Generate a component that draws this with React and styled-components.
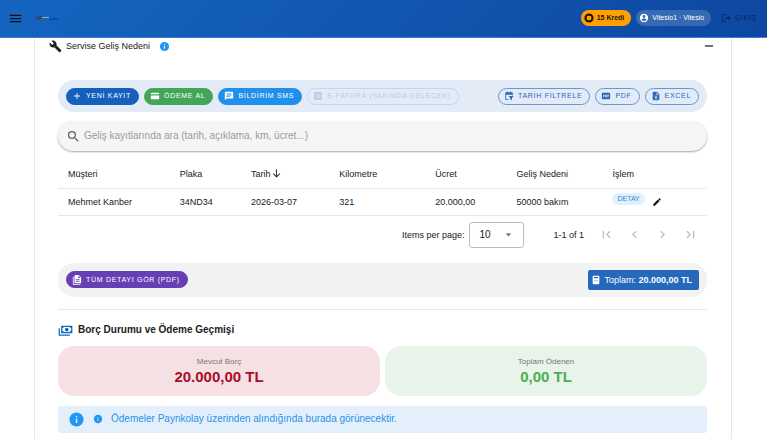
import React from "react";
import styled, { createGlobalStyle } from "styled-components";

const GlobalStyle = createGlobalStyle`
  * { box-sizing: border-box; }
  html { overflow: hidden; }
  body {
    margin: 0;
    background: #fff;
    color: #212121;
    font-family: "Liberation Sans", Arial, sans-serif;
    font-size: 9px;
    line-height: 12px;
  }
  button, input, select { font: inherit; color: inherit; margin: 0; }
  button { cursor: pointer; }
`;

const paths = {
  menu: "M3,6H21V8H3V6M3,11H21V13H3V11M3,16H21V18H3V16Z",
  wrench:
    "M22.7,19L13.6,9.9C14.5,7.6 14,4.9 12.1,3C10.1,1 7.1,0.6 4.7,1.7L9,6L6,9L1.6,4.7C0.4,7.1 0.9,10.1 2.9,12.1C4.8,14 7.5,14.5 9.8,13.6L18.9,22.7C19.3,23.1 19.9,23.1 20.3,22.7L22.6,20.4C23.1,20 23.1,19.3 22.7,19Z",
  info: "M13,9H11V7H13M13,17H11V11H13M12,2A10,10 0 0,0 2,12A10,10 0 0,0 12,22A10,10 0 0,0 22,12A10,10 0 0,0 12,2Z",
  minus: "M19,13H5V11H19V13Z",
  plus: "M19,13H13V19H11V13H5V11H11V5H13V11H19V13Z",
  card: "M4,4H20A2,2 0 0,1 22,6V8H2V6A2,2 0 0,1 4,4M2,11H22V18A2,2 0 0,1 20,20H4A2,2 0 0,1 2,18V11Z",
  message:
    "M20,2H4A2,2 0 0,0 2,4V22L6,18H20A2,2 0 0,0 22,16V4C22,2.89 21.1,2 20,2M6,9H18V11H6M14,14H6V12H14M18,8H6V6H18",
  invoice:
    "M5,3H19A2,2 0 0,1 21,5V19A2,2 0 0,1 19,21H5A2,2 0 0,1 3,19V5A2,2 0 0,1 5,3M6,7V9H8V7H6M10,7V9H18V7H10M6,11V13H8V11H6M10,11V13H18V11H10M6,15V17H8V15H6M10,15V17H18V15H10Z",
  calendar:
    "M7,1V3H5A2,2 0 0,0 3,5V19A2,2 0 0,0 5,21H11V19H5V9H19V11H21V5A2,2 0 0,0 19,3H17V1H15V3H9V1H7M11,12H23L19,17V22L15,20V17L11,12Z",
  pdf: "M4,4H20A2,2 0 0,1 22,6V18A2,2 0 0,1 20,20H4A2,2 0 0,1 2,18V6A2,2 0 0,1 4,4M5,9V15H6.5V13H8.5V9H5M6.5,10.3H7.3V11.7H6.5V10.3M10,9V15H12.5A1.5,1.5 0 0,0 14,13.5V10.5A1.5,1.5 0 0,0 12.5,9H10M11.5,10.5H12.5V13.5H11.5V10.5M15.5,9V15H17V13H18.5V11.5H17V10.5H19V9H15.5Z",
  excel:
    "M14,2H6A2,2 0 0,0 4,4V20A2,2 0 0,0 6,22H18A2,2 0 0,0 20,20V8L14,2M15.8,20H14L12,16.6L10,20H8.2L11.1,15.5L8.2,11H10L12,14.4L14,11H15.8L12.9,15.5L15.8,20M13,9V3.5L18.5,9H13Z",
  search:
    "M9.5,3A6.5,6.5 0 0,1 16,9.5C16,11.11 15.41,12.59 14.44,13.73L14.71,14H15.5L20.5,19L19,20.5L14,15.5V14.71L13.73,14.44C12.59,15.41 11.11,16 9.5,16A6.5,6.5 0 0,1 3,9.5A6.5,6.5 0 0,1 9.5,3M9.5,5C7,5 5,7 5,9.5C5,12 7,14 9.5,14C12,14 14,12 14,9.5C14,7 12,5 9.5,5Z",
  arrowDown: "M11,3H13V17L18.5,11.5L19.92,12.92L12,20.84L4.08,12.92L5.5,11.5L11,17V3Z",
  pencil:
    "M20.71,7.04C21.1,6.65 21.1,6 20.71,5.63L18.37,3.29C18,2.9 17.35,2.9 16.96,3.29L15.12,5.12L18.87,8.87M3,17.25V21H6.75L17.81,9.93L14.06,6.18L3,17.25Z",
  caret: "M7,10L12,15L17,10H7Z",
  first: "M18.41,16.59L13.82,12L18.41,7.41L17,6L11,12L17,18L18.41,16.59M6,6H8V18H6V6Z",
  prev: "M15.41,16.58L10.83,12L15.41,7.41L14,6L8,12L14,18L15.41,16.58Z",
  next: "M8.59,16.58L13.17,12L8.59,7.41L10,6L16,12L10,18L8.59,16.58Z",
  last: "M5.59,7.41L10.18,12L5.59,16.59L7,18L13,12L7,6L5.59,7.41M16,6H18V18H16V6Z",
  documents:
    "M16,0H8A2,2 0 0,0 6,2V18A2,2 0 0,0 8,20H20A2,2 0 0,0 22,18V6L16,0M18,16H9V14H18V16M18,12H9V10H18V12M15,7V1.5L20.5,7H15M4,4V22H20V24H4A2,2 0 0,1 2,22V4H4Z",
  calculator:
    "M6,2H18A2,2 0 0,1 20,4V20A2,2 0 0,1 18,22H6A2,2 0 0,1 4,20V4A2,2 0 0,1 6,2M7,5V8H17V5H7M8,12V13H10V12H8M11,12V13H13V12H11M14,12V13H16V12H14M8,16V17H10V16H8M11,16V17H13V16H11M14,16V17H16V16H14Z",
  cash: "M5,6H23V18H5V6M14,9A3,3 0 0,1 17,12A3,3 0 0,1 14,15A3,3 0 0,1 11,12A3,3 0 0,1 14,9M9,8A2,2 0 0,1 7,10V14A2,2 0 0,1 9,16H19A2,2 0 0,1 21,14V10A2,2 0 0,1 19,8H9M1,10H3V20H19V22H1V10Z",
  account:
    "M12,2A10,10 0 0,0 2,12A10,10 0 0,0 12,22A10,10 0 0,0 22,12A10,10 0 0,0 12,2M12,5A3.5,3.5 0 0,1 12,12A3.5,3.5 0 0,1 12,5M12,19.5C9.5,19.5 7.3,18.2 6,16.2C6,14.2 10,13.2 12,13.2C14,13.2 18,14.2 18,16.2C16.7,18.2 14.5,19.5 12,19.5Z",
  coin: "M12,1A11,11 0 0,0 1,12A11,11 0 0,0 12,23A11,11 0 0,0 23,12A11,11 0 0,0 12,1M12,6L14,7H17V10L18,12L17,14V17H14L12,18L10,17H7V14L6,12L7,10V7H10L12,6Z",
  logout:
    "M17,7L15.59,8.41L18.17,11H9V13H18.17L15.59,15.58L17,17L22,12L17,7M4,5H12V3H4A2,2 0 0,0 2,5V19A2,2 0 0,0 4,21H12V19H4V5Z",
};

const Svg = styled.svg`
  display: block;
  flex: none;
  width: ${(p) => p.$size}px;
  height: ${(p) => p.$size}px;
  fill: ${(p) => p.$color || "currentColor"};
`;

function Icon({ name, size = 10, color }) {
  return (
    <Svg viewBox="0 0 24 24" $size={size} $color={color} aria-hidden="true">
      <path fillRule="evenodd" d={paths[name]} />
    </Svg>
  );
}

const TopBar = styled.header`
  display: flex;
  align-items: center;
  height: 38px;
  margin-right: 1px;
  padding: 0 10px 1px 8px;
  border-bottom: 1px solid #3b7fd0;
  background: linear-gradient(135deg, #1565c0, #0d47a1);
`;

const IconButton = styled.button`
  display: inline-flex;
  align-items: center;
  justify-content: center;
  padding: 0;
  border: 0;
  background: none;
  color: ${(p) => p.$color || "#111"};
`;

const Logo = styled.svg`
  width: 24px;
  height: 8px;
  margin-left: 12px;
`;

const TopActions = styled.div`
  display: flex;
  align-items: center;
  gap: 5px;
  margin-left: auto;
`;

const Chip = styled.span`
  display: inline-flex;
  align-items: center;
  gap: 3px;
  height: 16px;
  padding: 0 7px 0 3px;
  border-radius: 8px;
  font-size: 7px;
  font-weight: ${(p) => (p.$credit ? 700 : 400)};
  color: ${(p) => (p.$credit ? "#201400" : "#fff")};
  background: ${(p) => (p.$credit ? "#ffa000" : "rgba(255, 255, 255, 0.17)")};
`;

const ExitButton = styled(IconButton)`
  gap: 4px;
  margin-left: 5px;
  color: #0a2351;
  font-size: 7px;
  letter-spacing: 0.1em;
`;

const Panel = styled.main`
  margin: 0 36px 0 34px;
  padding: 0 24px 6px 23px;
  border: solid #e8e8e8;
  border-width: 0 1px;
`;

const PanelHead = styled.div`
  display: flex;
  align-items: center;
  gap: 4px;
  height: 16px;
  margin: 0 -9px 26px;
`;

const PanelTitle = styled.h1`
  margin: 0 5px 0 0;
  font-size: 9px;
  font-weight: 400;
`;

const Spacer = styled.span`
  flex: 1;
`;

const ActionBar = styled.div`
  display: flex;
  align-items: center;
  gap: 5px;
  min-height: ${(p) => (p.$muted ? 34 : 32)}px;
  padding: 0 8px;
  border-radius: 16px;
  background: ${(p) => (p.$muted ? "#f2f2f2" : "#e3ebf7")};
`;

const PillButton = styled.button`
  display: inline-flex;
  align-items: center;
  gap: 4px;
  height: 17px;
  padding: 0 7px 0 5px;
  border: 1px solid ${(p) => p.$line || p.$fill};
  border-radius: 9px;
  background: ${(p) => p.$fill || "transparent"};
  color: ${(p) => p.$ink || "#fff"};
  font-size: 7px;
  letter-spacing: 0.1em;
  white-space: nowrap;
  &:disabled { cursor: default; }
`;

const SearchBox = styled.label`
  display: flex;
  align-items: center;
  gap: 3px;
  height: 30px;
  margin-top: 9px;
  padding: 0 8px;
  border-radius: 15px;
  background: #f5f5f5;
  box-shadow: 0 1px 2px rgba(0, 0, 0, 0.35);
  color: #616161;
`;

const SearchInput = styled.input`
  flex: 1;
  min-width: 0;
  padding: 0;
  border: 0;
  outline: 0;
  background: none;
  font-size: 10px;
  &::placeholder { color: #9b9b9b; opacity: 1; }
`;

const Table = styled.table`
  width: 100%;
  margin-top: 9px;
  border-collapse: collapse;
  table-layout: fixed;
`;

const Cell = styled.td`
  height: ${(p) => (p.$head ? 28 : 27)}px;
  padding: 0 10px;
  border-bottom: 1px solid #e8e8e8;
  font-weight: 400;
  text-align: left;
  white-space: nowrap;
`;

const Col = styled.col`
  width: ${(p) => p.$w}%;
`;

const Sort = styled.span`
  display: flex;
  align-items: center;
`;

const RowActions = styled.div`
  display: flex;
  gap: 7px;
`;

const DetailButton = styled.button`
  height: 12px;
  margin-bottom: 6px;
  padding: 0 5px;
  border: 0;
  border-radius: 6px;
  background: #e0f0fd;
  color: #2b8de3;
  font-size: 7px;
  line-height: 12px;
`;

const Pager = styled.div`
  display: flex;
  align-items: center;
  justify-content: flex-end;
  height: 38px;
  margin-bottom: 9px;
  padding-right: 9px;
`;

const SelectWrap = styled.div`
  display: grid;
  align-items: center;
  width: 55px;
  height: 26px;
  margin: 0 29px 0 5px;
  border: 1px solid #bdbdbd;
  border-radius: 3px;
  > * { grid-area: 1 / 1; }
  > svg { justify-self: end; margin-right: 8px; pointer-events: none; }
`;

const Select = styled.select`
  width: 100%;
  height: 100%;
  padding: 0 9px;
  border: 0;
  appearance: none;
  background: none;
  font-size: 10px;
`;

const PageButtons = styled.div`
  display: flex;
  gap: 13px;
  margin-left: 15px;
`;

const Total = styled.div`
  display: flex;
  align-items: center;
  gap: 3px;
  height: 20px;
  padding: 0 7px 0 3px;
  border-radius: 2px;
  background: #2569bd;
  color: #fff;
`;

const DebtHead = styled.h2`
  display: flex;
  align-items: center;
  gap: 5px;
  height: 37px;
  margin: 12px 0 0;
  padding-top: 4px;
  border-top: 1px solid #e8e8e8;
  font-size: 10px;
  font-weight: 700;
`;

const Summary = styled.div`
  display: grid;
  grid-template-columns: 1fr 1fr;
  gap: 5px;
`;

const SummaryCard = styled.section`
  padding: 10px;
  border-radius: 16px;
  background: ${(p) => p.$bg};
  text-align: center;
`;

const SummaryLabel = styled.div`
  color: #777;
  font-size: 8px;
  line-height: 12px;
`;

const Amount = styled.div`
  color: ${(p) => p.$color};
  font-size: 15px;
  font-weight: 700;
  line-height: 18px;
`;

const Notice = styled.div`
  display: flex;
  align-items: center;
  gap: 8px;
  height: 27px;
  margin-top: 10px;
  padding: 0 10px;
  border-radius: 3px;
  background: #e3f0fc;
  color: #2d91e8;
  font-size: 10px;
`;

const columns = [
  ["Müşteri", 17.2],
  ["Plaka", 11],
  ["Tarih", 13.6],
  ["Kilometre", 14.8],
  ["Ücret", 12.5],
  ["Geliş Nedeni", 14.8],
  ["İşlem", 16.1],
];
const record = ["Mehmet Kanber", "34ND34", "2026-03-07", "321", "20.000,00", "50000 bakım"];
const pages = [
  ["first", "İlk sayfa"],
  ["prev", "Önceki sayfa"],
  ["next", "Sonraki sayfa"],
  ["last", "Son sayfa"],
];

export default function App() {
  return (
    <>
      <GlobalStyle />
      <TopBar>
        <IconButton aria-label="Menü">
          <Icon name="menu" size={15} />
        </IconButton>
        <Logo viewBox="0 0 24 8" aria-hidden="true">
          <path d="M0 4.5Q3 1 8 2.5L6 5.5Q3 7 0 4.5Z" fill="#244e78" />
          <path d="M7 3h7v1H7z" fill="#8daab9" />
          <path d="M5 5h10v1H5z" fill="#315f89" />
          <path d="M14 4h9v2h-9z" fill="#064cc7" />
        </Logo>
        <TopActions>
          <Chip $credit>
            <Icon name="coin" size={10} />
            15 Kredi
          </Chip>
          <Chip>
            <Icon name="account" size={10} />
            Vitesio1 · Vitesio
          </Chip>
          <ExitButton>
            <Icon name="logout" size={10} />
            ÇIKIŞ
          </ExitButton>
        </TopActions>
      </TopBar>

      <Panel>
        <PanelHead>
          <Icon name="wrench" size={13} />
          <PanelTitle>Servise Geliş Nedeni</PanelTitle>
          <Icon name="info" size={11} color="#2196f3" />
          <Spacer />
          <IconButton aria-label="Daralt">
            <Icon name="minus" size={14} />
          </IconButton>
        </PanelHead>

        <ActionBar>
          <PillButton $fill="#1560bd">
            <Icon name="plus" />
            YENİ KAYIT
          </PillButton>
          <PillButton $fill="#43a657">
            <Icon name="card" />
            ÖDEME AL
          </PillButton>
          <PillButton $fill="#218fec">
            <Icon name="message" />
            BİLDİRİM SMS
          </PillButton>
          <PillButton $line="#c4d6ee" $ink="#b5cbe8" disabled>
            <Icon name="invoice" />
            E-FATURA (YAKINDA GELECEK)
          </PillButton>
          <Spacer />
          <PillButton $line="#6897d2" $ink="#2469bd">
            <Icon name="calendar" />
            TARİH FİLTRELE
          </PillButton>
          <PillButton $line="#6897d2" $ink="#2469bd">
            <Icon name="pdf" />
            PDF
          </PillButton>
          <PillButton $line="#6897d2" $ink="#2469bd">
            <Icon name="excel" />
            EXCEL
          </PillButton>
        </ActionBar>

        <SearchBox>
          <Icon name="search" size={15} />
          <SearchInput
            aria-label="Geliş kayıtlarında ara"
            placeholder="Geliş kayıtlarında ara (tarih, açıklama, km, ücret...)"
          />
        </SearchBox>

        <Table>
          <colgroup>
            {columns.map(([label, w]) => (
              <Col key={label} $w={w} />
            ))}
          </colgroup>
          <thead>
            <tr>
              {columns.map(([label]) => (
                <Cell as="th" scope="col" $head key={label}>
                  {label === "Tarih" ? (
                    <Sort>
                      {label}
                      <Icon name="arrowDown" size={11} />
                    </Sort>
                  ) : (
                    label
                  )}
                </Cell>
              ))}
            </tr>
          </thead>
          <tbody>
            <tr>
              {record.map((value) => (
                <Cell key={value}>{value}</Cell>
              ))}
              <Cell>
                <RowActions>
                  <DetailButton>DETAY</DetailButton>
                  <IconButton aria-label="Düzenle">
                    <Icon name="pencil" size={10} />
                  </IconButton>
                </RowActions>
              </Cell>
            </tr>
          </tbody>
        </Table>

        <Pager>
          <label htmlFor="page-size">Items per page:</label>
          <SelectWrap>
            <Select id="page-size" defaultValue="10">
              <option>10</option>
              <option>25</option>
              <option>50</option>
            </Select>
            <Icon name="caret" size={13} color="#616161" />
          </SelectWrap>
          <span>1-1 of 1</span>
          <PageButtons>
            {pages.map(([name, label]) => (
              <IconButton key={name} aria-label={label} $color="#bdbdbd" disabled>
                <Icon name={name} size={15} />
              </IconButton>
            ))}
          </PageButtons>
        </Pager>

        <ActionBar $muted>
          <PillButton $fill="#673fb4">
            <Icon name="documents" />
            TÜM DETAYI GÖR (PDF)
          </PillButton>
          <Spacer />
          <Total>
            <Icon name="calculator" size={10} />
            <span>
              Toplam: <strong>20.000,00 TL</strong>
            </span>
          </Total>
        </ActionBar>

        <DebtHead>
          <Icon name="cash" size={15} color="#1867c0" />
          Borç Durumu ve Ödeme Geçmişi
        </DebtHead>
        <Summary>
          <SummaryCard $bg="#f5e0e3">
            <SummaryLabel>Mevcut Borç</SummaryLabel>
            <Amount $color="#ac0c29">20.000,00 TL</Amount>
          </SummaryCard>
          <SummaryCard $bg="#e8f3e9">
            <SummaryLabel>Toplam Ödenen</SummaryLabel>
            <Amount $color="#4caf50">0,00 TL</Amount>
          </SummaryCard>
        </Summary>
        <Notice>
          <Icon name="info" size={17} color="#2196f3" />
          <Icon name="info" size={10} color="#2196f3" />
          Ödemeler Paynkolay üzerinden alındığında burada görünecektir.
        </Notice>
      </Panel>
    </>
  );
}
